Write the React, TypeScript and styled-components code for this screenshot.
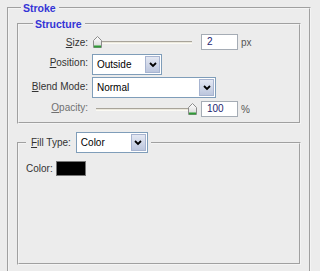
import React from 'react';
import styled, { createGlobalStyle } from 'styled-components';

const GlobalStyle = createGlobalStyle`
  html, body {
    margin: 0;
    padding: 0;
    background: #ececec;
    font-family: "Liberation Sans", Arial, sans-serif;
    font-size: 10px;
    color: #333;
    overflow: hidden;
  }
`;

const Panel = styled.div`
  width: 320px;
  height: 271px;
  overflow: hidden;
  padding-top: 2px;
  box-sizing: border-box;
`;

const Group = styled.fieldset`
  margin: 0;
  min-width: 0;
  box-sizing: border-box;
  border: 2px groove #f4f4f4;
  padding: 0;
`;

const OuterGroup = styled(Group)`
  margin-left: 7px;
  width: 304px;
  padding: 0 8px 30px 8px;
`;

const InnerGroup = styled(Group)<{ $top: number }>`
  margin-top: ${(p) => p.$top}px;
  width: 284px;
`;

const Legend = styled.legend<{ $indent: number }>`
  margin-left: ${(p) => p.$indent}px;
  padding: 0 3px 0 2px;
  line-height: 12px;
  font-size: 10.5px;
  font-weight: bold;
  color: #3434d6;
`;

const ControlLegend = styled.legend`
  margin-left: 7px;
  padding: 0 3px 0 5px;
  display: flex;
  align-items: center;
  gap: 5px;
`;

const Rows = styled.div`
  display: grid;
  grid-template-columns: 69px auto;
  column-gap: 4px;
  align-items: center;
  padding: 4px 0 5px 0;
`;

const Label = styled.span<{ $dim?: boolean }>`
  text-align: right;
  color: ${(p) => (p.$dim ? '#707070' : '#333')};
  white-space: nowrap;
  u {
    text-decoration: underline;
  }
`;

const Line = styled.div<{ $mt: number }>`
  display: flex;
  align-items: center;
  margin-top: ${(p) => p.$mt}px;
`;

const SliderBox = styled.div`
  position: relative;
  width: 106px;
  height: 14px;
`;

const Track = styled.div`
  position: absolute;
  left: 4px;
  right: 6px;
  top: 6px;
  height: 1px;
  border-top: 1px solid #a8a49a;
  border-bottom: 1px solid #fbfaf4;
  background: #ebe8dc;
`;

const Thumb = styled.svg`
  position: absolute;
  top: 1px;
`;

const NumberBox = styled.div`
  margin-left: 3px;
  width: 37px;
  height: 16px;
  box-sizing: border-box;
  border: 1px solid #a5acb5;
  background: #fff;
  color: #1c2470;
  padding-left: 5px;
  line-height: 14px;
  font-size: 10px;
`;

const Unit = styled.span`
  margin-left: 3px;
  color: #555;
`;

const Select = styled.div<{ $w: number }>`
  width: ${(p) => p.$w}px;
  height: 21px;
  box-sizing: border-box;
  border: 1px solid #7f9db9;
  background: #fff;
  display: flex;
  align-items: stretch;
  padding: 1px;
`;

const SelectText = styled.span`
  flex: 1;
  padding-left: 3px;
  line-height: 17px;
  color: #000;
  font-size: 10px;
`;

const SelectButton = styled.div`
  width: 15px;
  box-sizing: border-box;
  border: 1px solid #a7b4d0;
  background: linear-gradient(#e4e8f3, #bcc6dd);
  display: flex;
  align-items: center;
  justify-content: center;
`;

const FillBody = styled.div`
  height: 102px;
  padding: 8px 0 0 7px;
  display: flex;
  align-items: flex-start;
  gap: 3px;
`;

const ColorLabel = styled.span`
  line-height: 15px;
  color: #333;
`;

const Swatch = styled.div`
  width: 30px;
  height: 15px;
  box-sizing: border-box;
  border: 1px solid #777;
  background: #000;
`;

const Chevron = () => (
  <svg width="8" height="6" viewBox="0 0 8 6">
    <path d="M1 1 L4 4 L7 1" fill="none" stroke="#000" strokeWidth="1.8" />
  </svg>
);

const Dropdown: React.FC<{ width: number; value: string }> = ({ width, value }) => (
  <Select $w={width}>
    <SelectText>{value}</SelectText>
    <SelectButton>
      <Chevron />
    </SelectButton>
  </Select>
);

const Slider: React.FC<{ value: number }> = ({ value }) => {
  // thumb runs from 1px to 96px inside the box
  const left = 1 + Math.round((95 * value) / 100);
  return (
    <SliderBox>
      <Track />
      <Thumb width="9" height="12" viewBox="0 0 9 12" style={{ left }}>
        <defs>
          <linearGradient id={`tg${value}`} x1="0" y1="0" x2="0" y2="1">
            <stop offset="0" stopColor="#ffffff" />
            <stop offset="1" stopColor="#d6d6d6" />
          </linearGradient>
        </defs>
        <path d="M0.5 4.5 L4.5 0.5 L8.5 4.5 V11.5 H0.5 Z" fill={`url(#tg${value})`} stroke="#8c8c8c" />
        <rect x="1" y="9.5" width="7" height="2" fill="#2f9b36" />
      </Thumb>
    </SliderBox>
  );
};

export default function App() {
  return (
    <Panel>
      <GlobalStyle />
      <OuterGroup>
        <Legend $indent={4}>Stroke</Legend>
        <InnerGroup $top={4}>
          <Legend $indent={14}>Structure</Legend>
          <Rows>
            <Label><u>S</u>ize:</Label>
            <Line $mt={0}>
              <Slider value={0} />
              <NumberBox>2</NumberBox>
              <Unit>px</Unit>
            </Line>
            <Label><u>P</u>osition:</Label>
            <Line $mt={4}>
              <Dropdown width={70} value="Outside" />
            </Line>
            <Label><u>B</u>lend Mode:</Label>
            <Line $mt={2}>
              <Dropdown width={124} value="Normal" />
            </Line>
            <Label $dim><u>O</u>pacity:</Label>
            <Line $mt={3}>
              <Slider value={100} />
              <NumberBox>100</NumberBox>
              <Unit>%</Unit>
            </Line>
          </Rows>
        </InnerGroup>
        <InnerGroup $top={8}>
          <ControlLegend>
            <Label><u>F</u>ill Type:</Label>
            <Dropdown width={72} value="Color" />
          </ControlLegend>
          <FillBody>
            <ColorLabel>Color:</ColorLabel>
            <Swatch />
          </FillBody>
        </InnerGroup>
      </OuterGroup>
    </Panel>
  );
}
